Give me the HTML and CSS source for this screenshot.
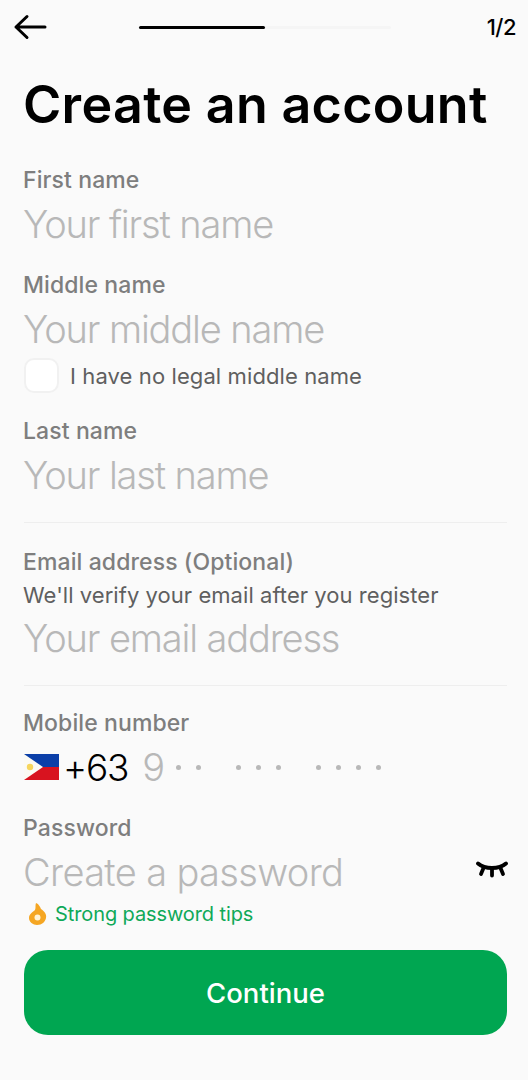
FILE: index.html
```html
<!DOCTYPE html>
<html lang="en">
<head>
<meta charset="utf-8">
<title>Create an account</title>
<link rel="stylesheet" href="styles.css">
</head>
<body>
<main class="screen">
  <header class="topbar">
    <button class="back" aria-label="Back">
      <svg width="34" height="26" viewBox="0 0 34 26"><path d="M32 13H3M14 2.500 3 13l11 10.500" fill="none" stroke="#000" stroke-width="3" stroke-linecap="round" stroke-linejoin="round"/></svg>
    </button>
    <div class="progress"><div class="progress-fill"></div></div>
    <span class="step">1/2</span>
  </header>
  <h1 class="title">Create an account</h1>

  <section class="field first">
    <div class="label">First name</div>
    <div class="input">Your first name</div>
  </section>
  <section class="field">
    <div class="label">Middle name</div>
    <div class="input">Your middle name</div>
    <div class="check-row"><span class="check"></span><span class="hint">I have no legal middle name</span></div>
  </section>
  <section class="field last-name">
    <div class="label">Last name</div>
    <div class="input">Your last name</div>
  </section>
  <hr class="rule rule-a">
  <section class="field">
    <div class="label">Email address (Optional)</div>
    <div class="hint verify">We'll verify your email after you register</div>
    <div class="input email">Your email address</div>
  </section>
  <hr class="rule rule-b">
  <section class="field mobile">
    <div class="label">Mobile number</div>
    <div class="phone">
      <svg class="flag" width="35" height="26" viewBox="0 0 35 26"><rect width="35" height="13" fill="#0b3fa8"/><rect y="13" width="35" height="13" fill="#d8131f"/><path d="M0 0 19 13 0 26Z" fill="#fbfaf4"/><circle cx="6" cy="13" r="3.200" fill="#f6d55c"/></svg>
      <span class="code">+63</span>
      <span class="nine">9</span>
      <span class="dots"><i></i><i></i><i class="gap"></i><i></i><i></i><i></i><i class="gap"></i><i></i><i></i><i></i><i></i></span>
    </div>
  </section>
  <section class="field password">
    <div class="label">Password</div>
    <div class="pw-row">
      <div class="input pw-input">Create a password</div>
      <svg class="eye" width="34" height="20" viewBox="0 0 34 20"><path d="M3 3.500C10 9.500 24 9.500 31 3.500" fill="none" stroke="#000" stroke-width="4" stroke-linecap="round"/><path d="M8.500 8 6 14M17 9.500V15.500M25.500 8l2.500 6" fill="none" stroke="#000" stroke-width="3.800" stroke-linecap="round"/></svg>
    </div>
    <div class="tips">
      <svg width="20" height="24" viewBox="0 0 20 24"><path d="M8 1c3 1 4 4 5 6 3 2 6 5 5 9-1 4-4 7-9 7-4 0-8-3-8-7 0-4 4-6 6-8C8 6 7 3 8 1Z" fill="#f5a623"/><circle cx="9.500" cy="15.500" r="3" fill="#fff3d6"/></svg>
      <span>Strong password tips</span>
    </div>
  </section>
  <button class="continue">Continue</button>
</main>
</body>
</html>
```
FILE: styles.css
```css
* { box-sizing: border-box; }
html, body { margin: 0; padding: 0; }
body {
  width: 528px;
  height: 1080px;
  background: #fafafa;
  font-family: Inter, "Liberation Sans", sans-serif;
  overflow: hidden;
}
.screen { padding: 0 21px 0 24px; }
.topbar {
  display: flex;
  align-items: center;
  height: 54px;
  margin-left: -11px;
  margin-right: -9px;
}
.back { width: 36px; height: 30px; padding: 0; border: 0; background: none; display: flex; align-items: center; }
.progress {
  width: 252px;
  height: 3px;
  margin-left: 90px;
  background: #f5f5f5;
  border-radius: 2px;
}
.progress-fill { width: 50%; height: 100%; background: #000; border-radius: 2px; }
.step { margin-left: auto; font-size: 22px; font-weight: 500; color: #000; letter-spacing: -0.5px; }
.title {
  margin: 20px 0 0 -1px;
  font-size: 52px;
  line-height: 62px;
  font-weight: 600;
  letter-spacing: 0.3px;
  color: #000;
  white-space: nowrap;
}
.field { margin-top: 26px; }
.field.first { margin-top: 31px; }
.field.last-name { margin-top: 25px; }
.field.password { margin-top: 25px; }
.label { margin-left: -1px; font-size: 23px; line-height: 26px; font-weight: 500; color: #7e7e7e; letter-spacing: 0.1px; }
.input {
  margin-left: -1px;
  font-size: 38px;
  line-height: 44px;
  font-weight: 300;
  color: #b8b8b8;
  margin-top: 9px;
  letter-spacing: -1.15px;
}
.pw-input { letter-spacing: -0.65px; }
.check-row { display: flex; align-items: center; gap: 11px; margin-top: 7px; }
.check {
  width: 35px;
  height: 35px;
  background: #fff;
  border: 2px solid #f1f1f1;
  border-radius: 10px;
}
.hint { font-size: 22px; line-height: 28px; color: #5f5f5f; letter-spacing: 0.1px; }
.rule { border: 0; border-top: 1px solid #eeeeee; margin: 25px 0 0; }
.verify { margin-top: 6px; margin-left: -1px; letter-spacing: 0.05px; }
.email { margin-top: 7px; }
.rule-b { margin-top: 25px; }
.field.mobile { margin-top: 24px; }
.phone { display: flex; align-items: center; margin-top: 8px; height: 46px; }
.flag { display: block; }
.code { font-size: 37px; color: #000; font-weight: 300; margin-left: 4px; letter-spacing: -1.2px; }
.nine { font-size: 38px; color: #b8b8b8; font-weight: 300; margin-left: 14px; }
.dots { display: flex; gap: 15px; margin-left: 11px; }
.dots i { width: 5px; height: 5px; border-radius: 50%; background: #b8b8b8; }
.dots i.gap { background: none; }
.pw-row { display: flex; align-items: center; justify-content: space-between; }
.eye { margin-right: -2px; margin-top: 4px; }
.tips { display: flex; align-items: center; gap: 7px; margin-top: 7px; margin-left: 4px; color: #0fa958; font-size: 20px; line-height: 26px; letter-spacing: -0.1px; }
.continue {
  display: block;
  width: 100%;
  height: 85px;
  margin-top: 23px;
  border: 0;
  border-radius: 24px;
  background: #00a651;
  color: #fff;
  font: 500 27.5px Inter, "Liberation Sans", sans-serif;
}
```
